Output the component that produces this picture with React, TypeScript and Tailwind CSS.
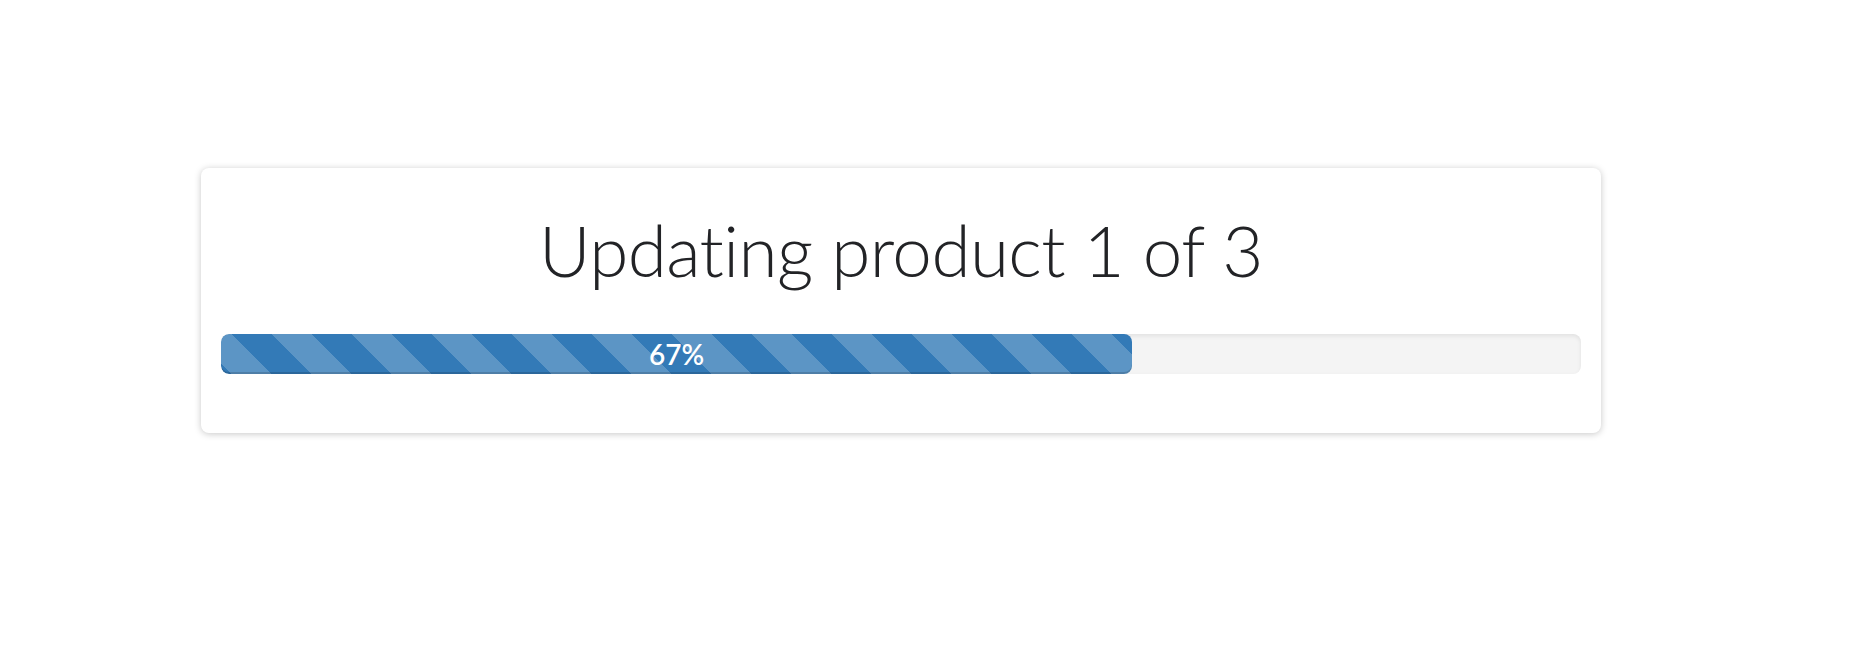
import React from 'react';

const progress = { current: 1, total: 3, percent: 67 };

function ProgressBar({ percent }: { percent: number }) {
  return (
    <div className="h-[40px] w-full rounded-[8px] bg-[#f4f4f4] shadow-[inset_0_2px_4px_rgba(0,0,0,0.08)] overflow-hidden">
      <div
        className="h-full rounded-[8px] bg-[#337ab7] bg-[linear-gradient(45deg,rgba(255,255,255,0.2)_25%,transparent_25%,transparent_50%,rgba(255,255,255,0.2)_50%,rgba(255,255,255,0.2)_75%,transparent_75%,transparent)] bg-[length:80px_80px] bg-[position:-29px_0] shadow-[inset_0_-2px_0_rgba(0,0,0,0.15)] flex items-center justify-center"
        style={{ width: `${percent}%` }}
      >
        <span className="text-white text-[28px] font-semibold leading-none font-['Lato','Liberation_Sans',sans-serif]">
          {percent}%
        </span>
      </div>
    </div>
  );
}

export default function App() {
  return (
    <div className="min-h-screen bg-white pt-[168px] pl-[201px]">
      <div className="w-[1400px] h-[265px] rounded-[8px] bg-white shadow-[0_1px_7px_rgba(0,0,0,0.22)] px-[20px] pt-[39px]">
        <h1 className="text-center text-[71px] leading-[1.2] font-light tracking-[-0.6px] [font-variant-ligatures:none] text-[#222326] font-['Lato','Liberation_Sans',sans-serif]">
          Updating product {progress.current} of {progress.total}
        </h1>
        <div className="mt-[42px]">
          <ProgressBar percent={progress.percent} />
        </div>
      </div>
    </div>
  );
}
